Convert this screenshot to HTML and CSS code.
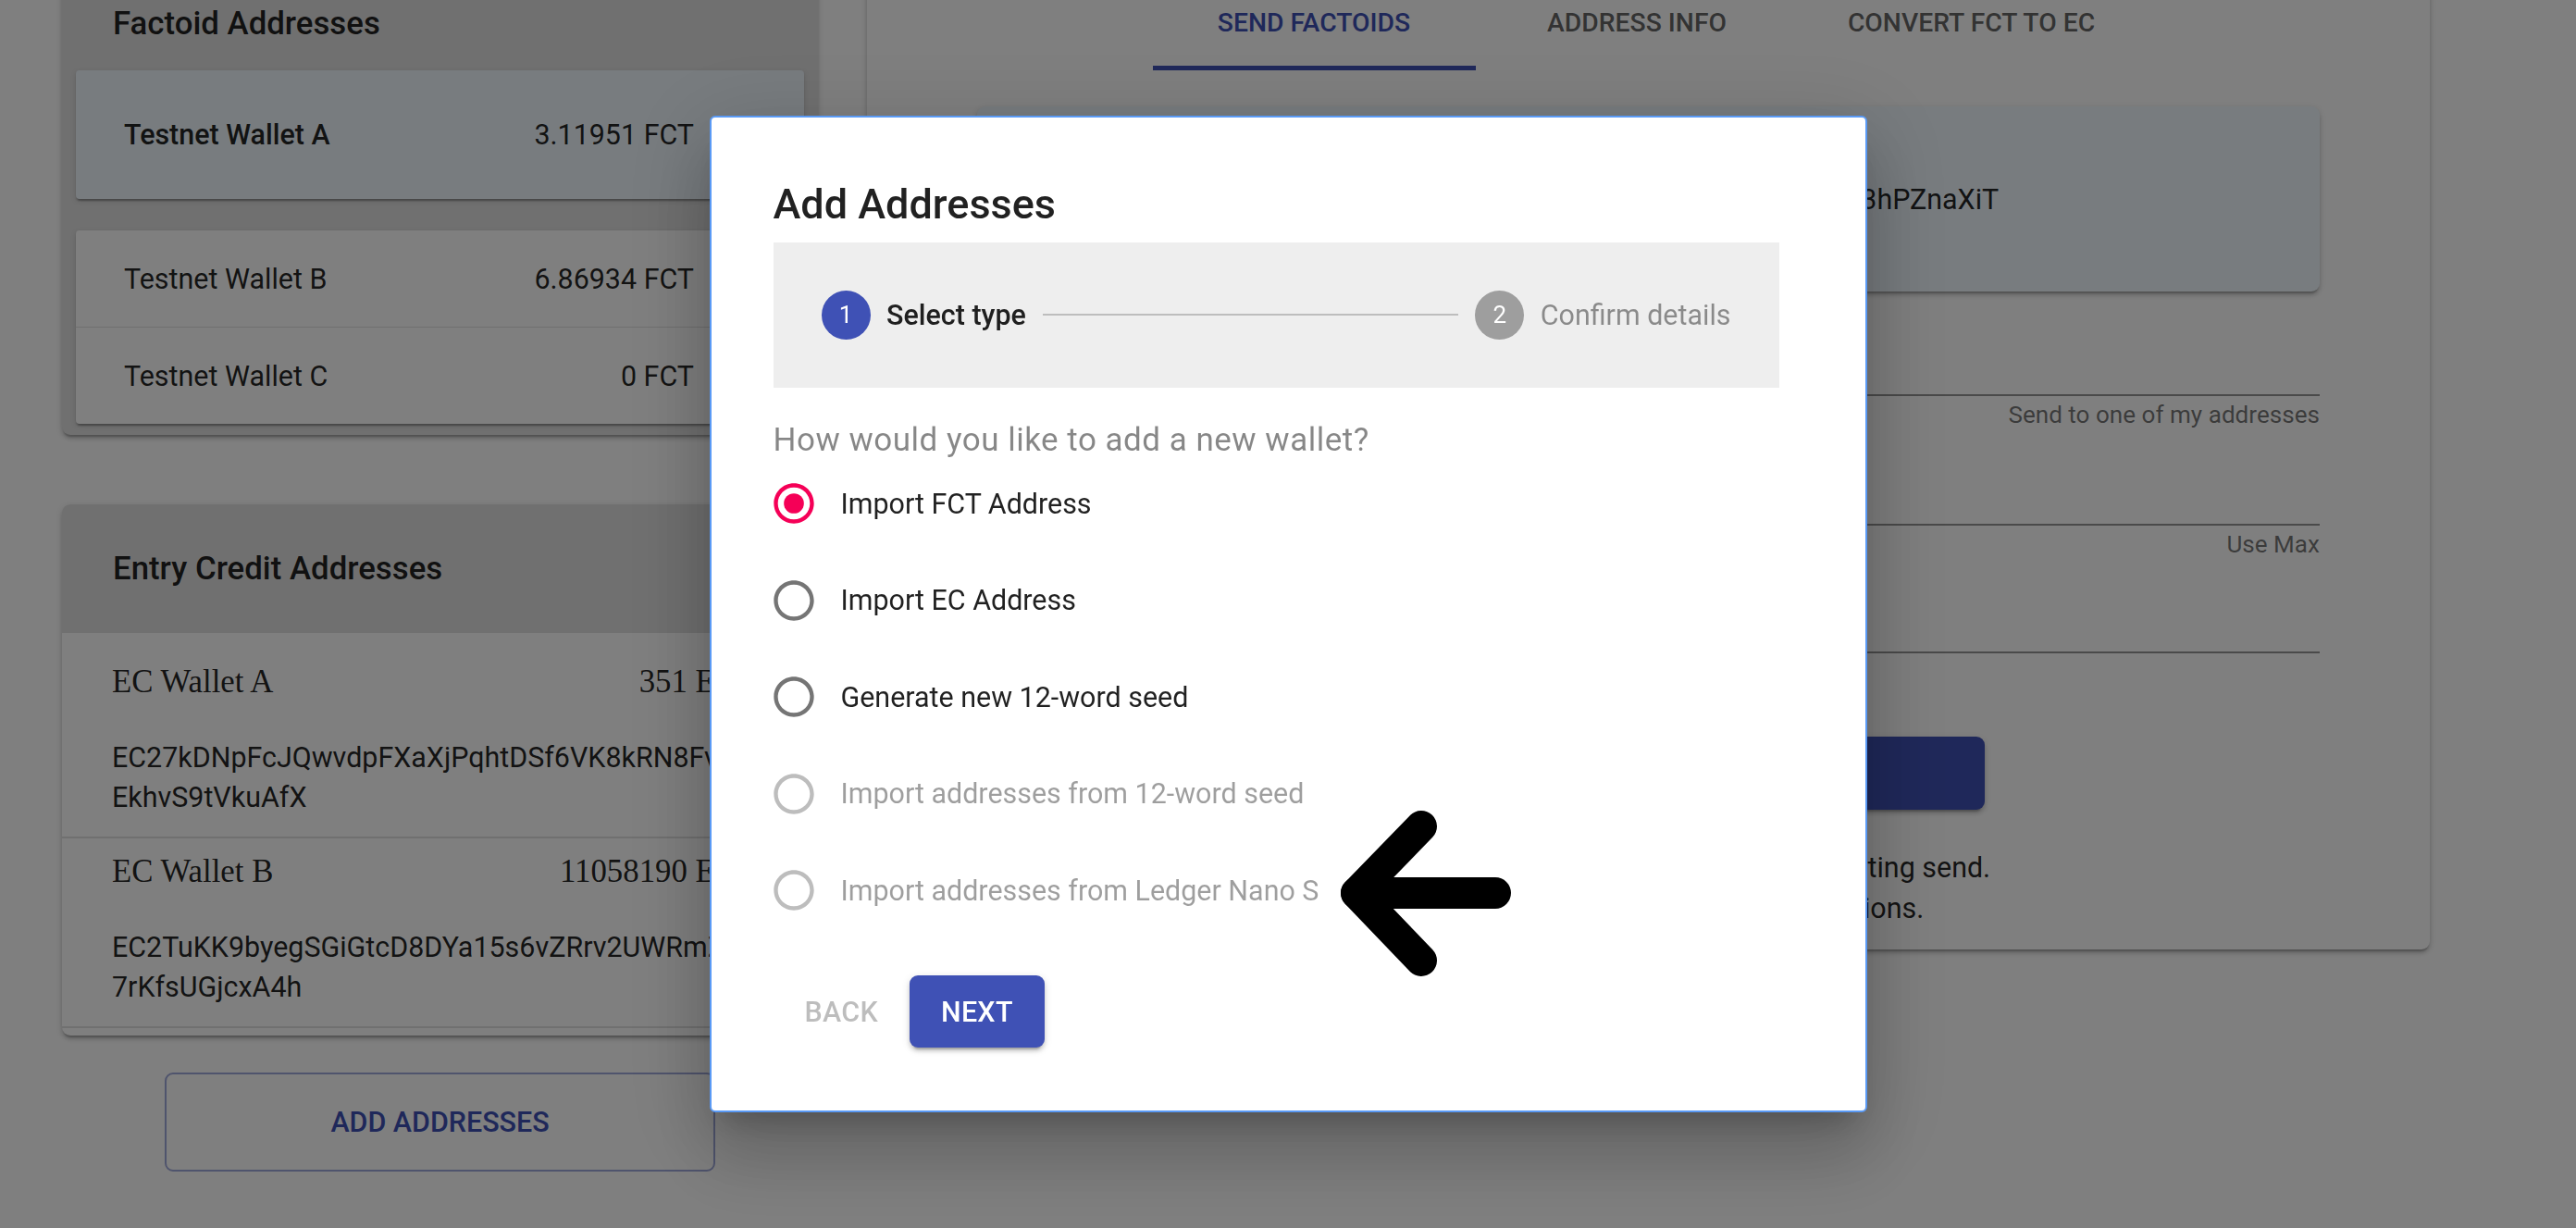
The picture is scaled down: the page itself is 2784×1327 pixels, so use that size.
FILE: index.html
```html
<!DOCTYPE html>
<html lang="en">
<head>
<meta charset="utf-8">
<title>Add Addresses</title>
<link rel="stylesheet" href="styles.css">
</head>
<body>
<div class="page">
  <aside class="left-col">
    <section class="card fct-card">
      <h2 class="card-title">Factoid Addresses</h2>
      <div class="paper item-selected">
        <div class="list-item tall"><span class="strong">Testnet Wallet A</span><span>3.11951 FCT</span></div>
      </div>
      <div class="paper item-group">
        <div class="list-item"><span>Testnet Wallet B</span><span>6.86934 FCT</span></div>
        <div class="list-item divided"><span>Testnet Wallet C</span><span>0 FCT</span></div>
      </div>
    </section>

    <section class="card ec-card">
      <header class="ec-header"><h2 class="card-title">Entry Credit Addresses</h2></header>
      <div class="ec-list">
        <div class="ec-item">
          <div class="ec-top"><span>EC Wallet A</span><span>351 EC</span></div>
          <div class="ec-address">EC27kDNpFcJQwvdpFXaXjPqhtDSf6VK8kRN8Fvq<br>EkhvS9tVkuAfX</div>
        </div>
        <div class="ec-item">
          <div class="ec-top"><span>EC Wallet B</span><span>11058190 EC</span></div>
          <div class="ec-address">EC2TuKK9byegSGiGtcD8DYa15s6vZRrv2UWRmZ<br>7rKfsUGjcxA4h</div>
        </div>
      </div>
    </section>

    <button class="outlined-btn" type="button">ADD ADDRESSES</button>
  </aside>

  <main class="panel">
    <nav class="tabs">
      <div class="tab active">Send Factoids</div>
      <div class="tab">Address Info</div>
      <div class="tab wide">Convert FCT to EC</div>
    </nav>
    <div class="addr-card">FA2jk2HcLnRdS94dEcU7rF3neoJfpUcZPSinp3hPZnaXiT</div>

    <div class="field field-1">
      <div class="field-input"></div>
      <div class="helper">Send to one of my addresses</div>
    </div>
    <div class="field field-2">
      <div class="field-input"></div>
      <div class="helper">Use Max</div>
    </div>
    <div class="field field-3">
      <div class="field-input"></div>
    </div>

    <button class="send-btn" type="button">Send</button>
    <div class="notes">
      <div>Please verify all of your details before submitting send.</div>
      <div>Sent funds are final. Review all transactions.</div>
    </div>
  </main>
</div>

<div class="backdrop">
  <div class="dialog" role="dialog">
    <h1 class="dialog-title">Add Addresses</h1>

    <div class="stepper">
      <div class="step active">
        <span class="step-icon">1</span>
        <span class="step-label">Select type</span>
      </div>
      <div class="connector"></div>
      <div class="step">
        <span class="step-icon">2</span>
        <span class="step-label">Confirm details</span>
      </div>
    </div>

    <p class="question">How would you like to add a new wallet?</p>

    <div class="radio-group">
      <label class="radio-row checked">
        <svg class="radio" viewBox="0 0 24 24"><path d="M12 2C6.48 2 2 6.48 2 12s4.48 10 10 10 10-4.48 10-10S17.52 2 12 2zm0 18c-4.42 0-8-3.58-8-8s3.58-8 8-8 8 3.58 8 8-3.58 8-8 8z"/><circle cx="12" cy="12" r="5"/></svg>
        <span class="radio-label">Import FCT Address</span>
      </label>
      <label class="radio-row">
        <svg class="radio" viewBox="0 0 24 24"><path d="M12 2C6.48 2 2 6.48 2 12s4.48 10 10 10 10-4.48 10-10S17.52 2 12 2zm0 18c-4.42 0-8-3.58-8-8s3.58-8 8-8 8 3.58 8 8-3.58 8-8 8z"/></svg>
        <span class="radio-label">Import EC Address</span>
      </label>
      <label class="radio-row">
        <svg class="radio" viewBox="0 0 24 24"><path d="M12 2C6.48 2 2 6.48 2 12s4.48 10 10 10 10-4.48 10-10S17.52 2 12 2zm0 18c-4.42 0-8-3.58-8-8s3.58-8 8-8 8 3.58 8 8-3.58 8-8 8z"/></svg>
        <span class="radio-label">Generate new 12-word seed</span>
      </label>
      <label class="radio-row disabled">
        <svg class="radio" viewBox="0 0 24 24"><path d="M12 2C6.48 2 2 6.48 2 12s4.48 10 10 10 10-4.48 10-10S17.52 2 12 2zm0 18c-4.42 0-8-3.58-8-8s3.58-8 8-8 8 3.58 8 8-3.58 8-8 8z"/></svg>
        <span class="radio-label">Import addresses from 12-word seed</span>
      </label>
      <label class="radio-row disabled">
        <svg class="radio" viewBox="0 0 24 24"><path d="M12 2C6.48 2 2 6.48 2 12s4.48 10 10 10 10-4.48 10-10S17.52 2 12 2zm0 18c-4.42 0-8-3.58-8-8s3.58-8 8-8 8 3.58 8 8-3.58 8-8 8z"/></svg>
        <span class="radio-label">Import addresses from Ledger Nano S</span>
      </label>
    </div>

    <div class="actions">
      <button class="btn btn-back" type="button" disabled>Back</button>
      <button class="btn btn-next" type="button">Next</button>
    </div>
  </div>

  <svg class="annot-arrow" viewBox="0 0 240 220" aria-hidden="true">
    <polyline points="116,33 46,105 116,178" fill="none" stroke="#000" stroke-width="34" stroke-linecap="round" stroke-linejoin="round"/>
    <line x1="46" y1="105" x2="196" y2="105" stroke="#000" stroke-width="34" stroke-linecap="round"/>
  </svg>
</div>
</body>
</html>
```

FILE: styles.css
```css
* { box-sizing: border-box; }

html, body { margin: 0; padding: 0; }

body {
  width: 2784px;
  height: 1327px;
  overflow: hidden;
  background: #ffffff;
  font-family: Roboto, "Noto Sans", "Liberation Sans", sans-serif;
  color: rgba(0, 0, 0, 0.87);
}

/* ---------- page under the backdrop (scrolled by 40px) ---------- */
.page {
  display: flex;
  align-items: flex-start;
  gap: 53px;
  margin-top: -40px;
  padding-left: 67px;
}

.left-col {
  width: 817px;
  display: flex;
  flex-direction: column;
}

.card {
  background: #e0e0e0;
  border-radius: 9px;
  box-shadow: 0 4px 2px -2px rgba(0,0,0,0.2), 0 4px 4px rgba(0,0,0,0.14), 0 2px 10px rgba(0,0,0,0.12);
}

.card-title {
  margin: 0;
  font-size: 34.8px;
  line-height: 42px;
  font-weight: 500;
}

.fct-card { padding: 44px 15px 12px; }
.fct-card .card-title { padding-left: 40px; }

.paper {
  border-radius: 4px;
  box-shadow: 0 4px 2px -2px rgba(0,0,0,0.2), 0 2px 2px rgba(0,0,0,0.14), 0 2px 6px rgba(0,0,0,0.12);
  overflow: hidden;
}

.item-selected { margin-top: 30px; background: #f0f8ff; }
.item-group { margin-top: 34px; background: #ffffff; }

.list-item {
  height: 104.4px;
  display: flex;
  align-items: center;
  justify-content: space-between;
  padding: 0 119px 0 52px;
  font-size: 30.45px;
}
.list-item.tall { height: 139px; }
.list-item.divided { border-top: 1px solid rgba(0,0,0,0.12); }
.strong { font-weight: 500; }

.ec-card {
  margin-top: 75px;
  height: 574px;
  overflow: hidden;
  background: #ffffff;
}
.ec-header {
  height: 139px;
  background: #e0e0e0;
  display: flex;
  align-items: center;
  padding-left: 55px;
}
.ec-list { padding-top: 17px; }
.ec-item {
  padding: 16px 88px 20px 54px;
  border-bottom: 2px solid rgba(0,0,0,0.12);
}
.ec-top {
  display: flex;
  justify-content: space-between;
  font-family: "Liberation Serif", "Times New Roman", serif;
  font-size: 34.8px;
  line-height: normal;
}
.ec-address {
  margin-top: 40px;
  font-size: 30.45px;
  line-height: 43.5px;
  white-space: nowrap;
}

.outlined-btn {
  margin: 40px auto 0;
  width: 595px;
  height: 107px;
  border: 2px solid rgba(63,81,181,0.5);
  border-radius: 9px;
  background: transparent;
  color: #3f51b5;
  font-family: Roboto, sans-serif;
  font-size: 30.45px;
  font-weight: 500;
}

/* ---------- right panel ---------- */
.panel {
  width: 1689px;
  margin-top: 12px;
  background: #ffffff;
  border-radius: 9px;
  box-shadow: 0 4px 2px -2px rgba(0,0,0,0.2), 0 4px 4px rgba(0,0,0,0.14), 0 2px 10px rgba(0,0,0,0.12);
  padding: 0 119px 22px;
  display: flex;
  flex-direction: column;
}

.tabs {
  display: flex;
  justify-content: center;
  height: 104px;
}
.tab {
  width: 349px;
  display: flex;
  align-items: center;
  justify-content: center;
  font-size: 28.3px;
  font-weight: 500;
  text-transform: uppercase;
  color: rgba(0,0,0,0.62);
}
.tab.wide { width: 374px; }
.tab.active {
  color: #3f51b5;
  box-shadow: inset 0 -5px 0 #3f51b5;
}

.addr-card {
  margin-top: 39px;
  height: 200px;
  background: #f0f8ff;
  border-radius: 9px;
  box-shadow: 0 4px 2px -2px rgba(0,0,0,0.2), 0 4px 4px rgba(0,0,0,0.14), 0 2px 10px rgba(0,0,0,0.12);
  display: flex;
  align-items: center;
  justify-content: center;
  font-size: 30.45px;
}

.field-input {
  height: 72px;
  border-bottom: 2px solid rgba(0,0,0,0.42);
}
.field-1 { margin-top: 41px; }
.field-2 { margin-top: 34px; }
.field-3 { margin-top: 32px; }
.helper {
  margin-top: 6px;
  font-size: 26.1px;
  line-height: 28px;
  text-align: right;
  color: rgba(0,0,0,0.54);
}

.send-btn {
  margin: 90px auto 0;
  width: 726px;
  height: 79px;
  border: none;
  border-radius: 9px;
  background: #3f51b5;
  color: #ffffff;
  font-family: Roboto, sans-serif;
  font-size: 30.45px;
  font-weight: 500;
  text-transform: uppercase;
  box-shadow: 0 6px 2px -4px rgba(0,0,0,0.2), 0 4px 4px rgba(0,0,0,0.14), 0 2px 10px rgba(0,0,0,0.12);
}

.notes {
  margin-top: 41px;
  text-align: center;
  font-size: 30.45px;
  line-height: 44px;
}

/* ---------- modal ---------- */
.backdrop {
  position: fixed;
  inset: 0;
  background: rgba(0,0,0,0.5);
  display: flex;
  align-items: center;
  justify-content: center;
}

.dialog {
  width: 1251px;
  background: #ffffff;
  border: 2px solid #5a9af5;
  border-radius: 6px;
  padding: 68px 93px 68px 67px;
  box-shadow: 0 22px 30px -14px rgba(0,0,0,0.2), 0 48px 76px 6px rgba(0,0,0,0.14), 0 18px 92px 16px rgba(0,0,0,0.12);
}

.dialog-title {
  margin: 0;
  font-size: 45px;
  line-height: 52px;
  font-weight: 500;
  color: rgba(0,0,0,0.87);
}

.stepper {
  margin-top: 15px;
  background: #eeeeee;
  padding: 52px;
  display: flex;
  align-items: center;
}
.step { display: flex; align-items: center; }
.step-icon {
  width: 53px;
  height: 53px;
  border-radius: 50%;
  background: #9e9e9e;
  color: #ffffff;
  font-size: 26px;
  display: flex;
  align-items: center;
  justify-content: center;
}
.step.active .step-icon { background: #3f51b5; }
.step-label {
  margin-left: 17.5px;
  font-size: 30.45px;
  color: rgba(0,0,0,0.42);
}
.step.active .step-label { color: rgba(0,0,0,0.87); font-weight: 500; }
.connector {
  flex: 1;
  margin: 0 18px;
  border-top: 2px solid #bdbdbd;
}

.question {
  margin: 40px 0 0;
  font-size: 35px;
  line-height: 33px;
  letter-spacing: 0.5px;
  color: rgba(0,0,0,0.47);
}

.radio-group { display: flex; flex-direction: column; }
.radio-row {
  height: 104.5px;
  display: flex;
  align-items: center;
}
.radio {
  width: 52px;
  height: 52px;
  margin-left: -4px;
  fill: rgba(0,0,0,0.54);
}
.radio-row.checked .radio { fill: #f50057; }
.radio-row.disabled .radio { fill: rgba(0,0,0,0.26); }
.radio-label {
  margin-left: 25px;
  font-size: 30.45px;
  color: rgba(0,0,0,0.87);
}
.radio-row.disabled .radio-label { color: rgba(0,0,0,0.38); }

.actions {
  margin-top: 40px;
  display: flex;
}
.btn {
  height: 78px;
  padding: 0 34px;
  border: none;
  border-radius: 9px;
  font-family: Roboto, sans-serif;
  font-size: 30.45px;
  font-weight: 500;
  letter-spacing: 0.3px;
  text-transform: uppercase;
}
.btn-back { background: transparent; color: rgba(0,0,0,0.26); }
.btn-next {
  background: #3f51b5;
  color: #ffffff;
  box-shadow: 0 6px 2px -4px rgba(0,0,0,0.2), 0 4px 4px rgba(0,0,0,0.14), 0 2px 10px rgba(0,0,0,0.12);
}

.annot-arrow {
  position: absolute;
  left: 1420px;
  top: 860px;
  width: 240px;
  height: 220px;
}
```
